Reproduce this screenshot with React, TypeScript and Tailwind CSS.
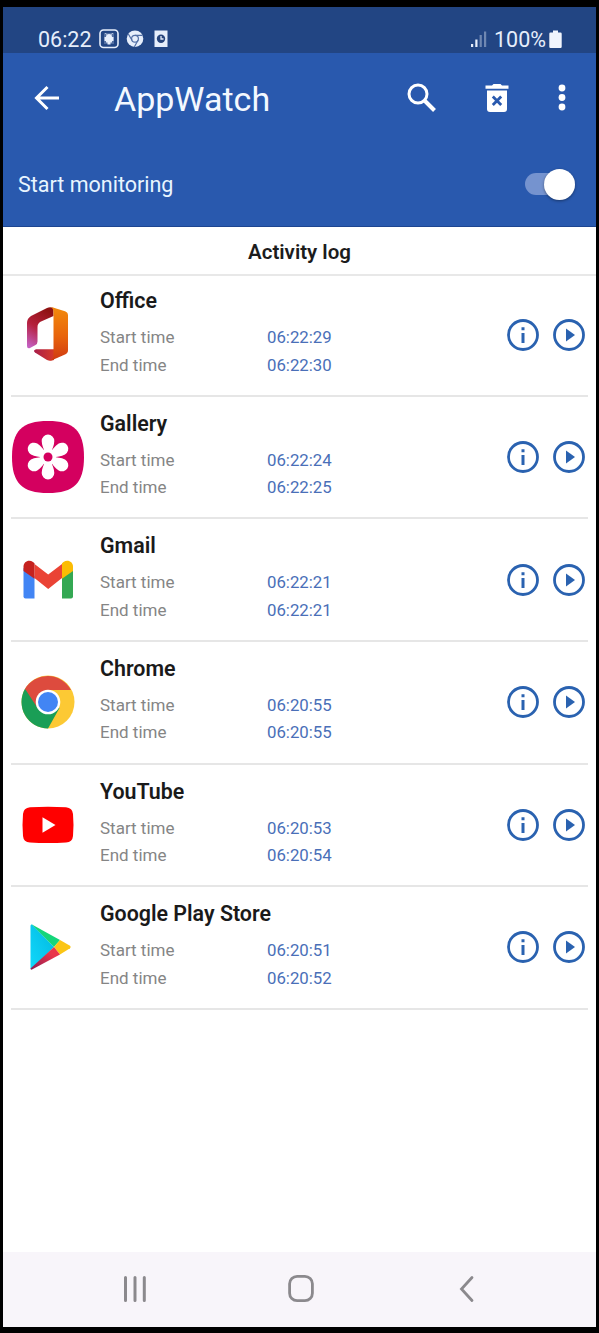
import { useState } from "react"
import type { ReactNode } from "react"

type LogEntry = {
  name: string
  start: string
  end: string
  icon: ReactNode
}

const OfficeIcon = () => (
  <svg width="72" height="72" viewBox="0 0 72 72">
    <defs>
      <linearGradient id="officeLeft" x1="0.6" y1="0" x2="0.2" y2="1">
        <stop offset="0" stopColor="#8f1212" />
        <stop offset="0.5" stopColor="#b5203c" />
        <stop offset="1" stopColor="#c45fc0" />
      </linearGradient>
      <linearGradient id="officeRight" x1="0" y1="0" x2="0" y2="1">
        <stop offset="0" stopColor="#f28a0c" />
        <stop offset="0.55" stopColor="#e8640c" />
        <stop offset="1" stopColor="#cf3a12" />
      </linearGradient>
      <linearGradient id="officeBase" x1="0" y1="0" x2="1" y2="0">
        <stop offset="0" stopColor="#a81d4a" />
        <stop offset="1" stopColor="#d63a2a" />
      </linearGradient>
    </defs>
    <path d="M35 9q3-1.500 6.500 0v8L28.500 22.800Q25.500 24.500 25.500 28v14.500q0 2.500-2 3.500L18 49q-3 1-3-2V24q0-4.500 4-7Z" fill="url(#officeLeft)" />
    <path d="M24 50.200h18V61q-4 1.500-7 0L23 53.500q-2.500-2 1-3.300Z" fill="url(#officeBase)" />
    <path d="M38 8.300l3 .2 12 3.700q3 1 3 4.300v34.800q0 3-3 4.200l-12 5.200q-2 .8-4 .5 4.500-.8 4.500-5V13q0-4-3.500-4.700Z" fill="url(#officeRight)" />
  </svg>
)

const GalleryIcon = () => (
  <svg width="72" height="72" viewBox="0 0 72 72">
    <path d="M36 0C62 0 72 10 72 36S62 72 36 72 0 62 0 36 10 0 36 0Z" fill="#d4005f" />
    <g fill="#fff">
      {[0, 60, 120, 180, 240, 300].map((angle) => (
        <path
          key={angle}
          transform={`rotate(${angle} 36 36)`}
          d="M33 32C32 28 29.700 24.500 29.700 20a6.300 6.500 0 0 1 12.600 0C42.300 24.500 40 28 39 32L36 36Z"
        />
      ))}
      <circle cx="36" cy="36" r="8" />
    </g>
    <circle cx="36" cy="36" r="4.500" fill="#d4005f" />
  </svg>
)

const GmailIcon = () => (
  <svg width="72" height="72" viewBox="0 0 72 72">
    <path d="M11.500 24 22.500 32v22.500h-9q-2 0-2-2Z" fill="#4285f4" />
    <path d="M61 24 50 32v22.500h9q2 0 2-2Z" fill="#34a853" />
    <path d="m22.500 20 13.700 10.500L50 20v14L36.200 45 22.500 34Z" fill="#ea4335" />
    <path d="M11.500 27v-4.500c0-5 5.500-7.500 9.500-4.500l1.500 1.200v15.500l-11-7.700Z" fill="#c5221f" />
    <path d="M61 27v-4.500c0-5-5.500-7.500-9.500-4.500L50 19.200v15.500L61 27Z" fill="#fbbc04" />
  </svg>
)

const ChromeIcon = () => (
  <svg width="72" height="72" viewBox="0 0 72 72">
    <circle cx="36" cy="36" r="26.500" fill="#fcc934" />
    <path d="M36 36 13 22.800A26.500 26.500 0 0 0 36 62.500L47.500 42Z" fill="#1a9e56" />
    <path d="M13 22.800A26.500 26.500 0 0 1 59 24H36L25.500 42Z" fill="#dd4b3e" />
    <circle cx="36" cy="36" r="12.300" fill="#fff" />
    <circle cx="36" cy="36" r="10" fill="#4285f4" />
  </svg>
)

const YouTubeIcon = () => (
  <svg width="72" height="72" viewBox="0 0 72 72">
    <path d="M18 18.300Q36 17.300 54 18.300 60.500 19 61 25 62 36 61 47 60.500 53 54 53.500 36 54.500 18 53.500 11.500 53 11 47 10 36 11 25 11.500 19 18 18.300Z" fill="#f00" />
    <path d="M30.500 28.300v15.400L43.500 36Z" fill="#fff" />
  </svg>
)

const PlayStoreIcon = () => (
  <svg width="72" height="72" viewBox="0 0 72 72">
    <defs>
      <linearGradient id="playBlue" x1="1" y1="0" x2="0" y2="1">
        <stop offset="0" stopColor="#00b8e0" />
        <stop offset="1" stopColor="#12d8fb" />
      </linearGradient>
      <linearGradient id="playRed" x1="1" y1="0" x2="0" y2="1">
        <stop offset="0.3" stopColor="#e9364a" />
        <stop offset="1" stopColor="#8c1a53" />
      </linearGradient>
    </defs>
    <path d="M18.500 15v42q0 1.500 1.500.5L42 36 20 13.500Q18.500 13 18.500 15Z" fill="url(#playBlue)" />
    <path d="M19.500 13.200 48 29 42 36Z" fill="#14d67a" />
    <path d="m48 29 10 5.800q1.500 1.200 0 2.400L48 43.500 42 36Z" fill="#fbc515" />
    <path d="m42 36 6 7.500L20 58.500q-1.500.5-1.500-1Z" fill="url(#playRed)" />
  </svg>
)

const entries: LogEntry[] = [
  { name: "Office", start: "06:22:29", end: "06:22:30", icon: <OfficeIcon /> },
  { name: "Gallery", start: "06:22:24", end: "06:22:25", icon: <GalleryIcon /> },
  { name: "Gmail", start: "06:22:21", end: "06:22:21", icon: <GmailIcon /> },
  { name: "Chrome", start: "06:20:55", end: "06:20:55", icon: <ChromeIcon /> },
  { name: "YouTube", start: "06:20:53", end: "06:20:54", icon: <YouTubeIcon /> },
  { name: "Google Play Store", start: "06:20:51", end: "06:20:52", icon: <PlayStoreIcon /> },
]

export default function App() {
  const [monitoring, setMonitoring] = useState(true)

  return (
    <div className="h-[1333px] w-[599px] bg-black px-[3px] pt-[7px] pb-[6px] font-['Roboto',sans-serif]">
      <div className="flex h-full flex-col bg-white">
        <StatusBar />
        <Toolbar />

        <div className="flex h-[85px] items-center justify-between border-b border-[#1d4590] bg-[#2959ae] pr-[21px] pl-[15px]">
          <span className="pt-[3px] text-[21.5px] text-[#e8f5ff]">Start monitoring</span>
          <button
            role="switch"
            aria-label="Start monitoring"
            aria-checked={monitoring}
            onClick={() => setMonitoring(!monitoring)}
            className={`flex h-[22px] w-[50px] items-center rounded-full bg-[#7593cf] ${monitoring ? "justify-end" : "justify-start"}`}
          >
            <span className="size-[31px] shrink-0 rounded-full bg-white shadow-[0_1px_3px_rgba(0,0,0,0.4)]" />
          </button>
        </div>

        <h2 className="h-[49px] border-b-2 border-[#e8e8e8] text-center text-[20.5px] leading-[51px] font-semibold text-[#1c1c1c]">
          Activity log
        </h2>

        <ul className="-mt-[1.8px] flex-1 px-2">
          {entries.map((entry) => (
            <LogRow key={entry.name} entry={entry} />
          ))}
        </ul>

        <NavBar />
      </div>
    </div>
  )
}

const StatusBar = () => (
  <div className="flex h-[46px] items-center justify-between bg-[#224583] pt-[18px] pr-[34px] pl-[35px] text-[#e6eefb]">
    <div className="flex items-center">
      <span className="w-[61px] pt-px text-[21.5px] leading-7">06:22</span>
      <svg width="72" height="20" viewBox="0 0 72 20" fill="#e6eefb">
        <rect x="1" y="1" width="18" height="17.500" rx="3.500" fill="none" stroke="#e6eefb" strokeWidth="1.600" />
        <path d="M5 4h10v11H5z" opacity="0.25" />
        <path d="M7.500 5.500 6.500 4.200M12.500 5.500l1-1.300" stroke="#e6eefb" />
        <path d="M7 8a3 3 0 0 1 6 0h1.500v4H13v1.500h-1.500v2h-3v-2H7V12H5.500V8Z" />
        <circle cx="36" cy="9.700" r="8.300" />
        <g fill="none" stroke="#526fa5" strokeWidth="1.200">
          <circle cx="36" cy="9.700" r="3.400" />
          <path d="M36 6.300h7.500M33 11.300 29.300 5M39 11.300 35.300 18" />
        </g>
        <path d="M55.500 1.500h13v16.500h-13z" />
        <circle cx="62" cy="9.700" r="4.200" fill="#28457c" />
        <path d="M62 7v3h2.500" fill="none" stroke="#e6eefb" strokeWidth="1.300" />
      </svg>
    </div>
    <div className="flex items-center">
      <svg width="16" height="18" viewBox="0 0 16 18" fill="#e6eefb" className="mr-[7px]">
        <path d="M0 14h2.200v3H0zM4.300 9.500h2.200V17H4.300z" />
        <path d="M8.600 5h2.200v12H8.600zM13 1.500h2.200V17H13z" opacity="0.4" />
      </svg>
      <span className="pt-px text-[21.5px] leading-7">100%</span>
      <svg width="13" height="19" viewBox="0 0 13 19" fill="#f1f5fd" className="ml-[3px]">
        <path d="M4 .5h5v2h2.500q1.200 0 1.200 1.200v13q0 1.300-1.200 1.300h-10Q.3 18 .3 16.700v-13q0-1.200 1.200-1.200H4Z" />
      </svg>
    </div>
  </div>
)

const Toolbar = () => (
  <div className="flex h-[89px] items-center bg-[#2959ae] pr-[30px] pl-[31px] text-white">
    <button aria-label="Back">
      <svg width="26" height="26" viewBox="0 0 26 26" fill="none" stroke="currentColor" strokeWidth="3">
        <path d="M25 13H3M13.500 2 2.500 13l11 11" />
      </svg>
    </button>
    <h1 className="ml-[54px] flex-1 pt-[2px] text-[34px] leading-10 text-[#f3f8ff]">AppWatch</h1>
    <button aria-label="Search">
      <svg width="29" height="29" viewBox="0 0 29 29" fill="none" stroke="currentColor" strokeWidth="3">
        <circle cx="11" cy="11" r="9" />
        <path d="m17 17 10.500 10.500" strokeWidth="4" />
      </svg>
    </button>
    <button aria-label="Clear log" className="ml-[49px]">
      <svg width="24" height="30" viewBox="0 0 24 30" fill="currentColor">
        <path d="M.5 2.500H7L8.500 1h7L17 2.500h6.500v3.300H.5Z" />
        <path d="M2 7.500h20v18.500q0 3-3 3H5q-3 0-3-3Z" />
        <path d="m7.800 13.500 8.400 8.500M16.200 13.500 7.800 22" stroke="#2959ae" strokeWidth="2.800" />
      </svg>
    </button>
    <button aria-label="More options" className="ml-[49px]">
      <svg width="8" height="27" viewBox="0 0 8 27" fill="currentColor">
        <circle cx="4" cy="4" r="3.400" />
        <circle cx="4" cy="13.500" r="3.400" />
        <circle cx="4" cy="23" r="3.400" />
      </svg>
    </button>
  </div>
)

const LogRow = ({ entry }: { entry: LogEntry }) => (
  <li className="flex h-[122.6px] items-center border-b-2 border-[#e6e6e6] pr-[3px]">
    <div className="w-[89px] shrink-0 pl-[0.5px]">{entry.icon}</div>
    <div className="flex-1 self-start pt-[13px]">
      <h3 className="text-[21.4px] leading-7 font-semibold text-[#1a1a1a]">{entry.name}</h3>
      <dl className="mt-[9px] grid grid-cols-[167px_1fr] text-[17px] leading-[27.5px]">
        <dt className="text-[#858585]">Start time</dt>
        <dd className="text-[16.8px] text-[#4a6fb8]">{entry.start}</dd>
        <dt className="text-[#858585]">End time</dt>
        <dd className="text-[16.8px] text-[#4a6fb8]">{entry.end}</dd>
      </dl>
    </div>
    <div className="flex gap-[14px] text-[#2a62b0]">
      <button aria-label="App info">
        <svg width="32" height="32" viewBox="0 0 32 32" fill="currentColor">
          <circle cx="16" cy="16" r="14.500" fill="none" stroke="currentColor" strokeWidth="2.800" />
          <path d="M14.500 8.200h3v3h-3zM14.500 14h3v10h-3z" />
        </svg>
      </button>
      <button aria-label="Launch app">
        <svg width="32" height="32" viewBox="0 0 32 32" fill="currentColor">
          <circle cx="16" cy="16" r="14.500" fill="none" stroke="currentColor" strokeWidth="2.800" />
          <path d="M13 9.500v13l9-6.500Z" />
        </svg>
      </button>
    </div>
  </li>
)

const NavBar = () => (
  <div className="flex h-[75px] items-center bg-[#f8f5fa] pr-[122px] pb-[2px] pl-[120px] text-[#8b898d]">
    <svg width="24" height="28" viewBox="0 0 24 28" fill="none" stroke="currentColor" strokeWidth="3" strokeLinecap="round">
      <path d="M2.500 2.500v23M12 2.500v23M21.300 2.500v23" />
    </svg>
    <svg width="26" height="29" viewBox="0 0 26 29" fill="none" stroke="currentColor" strokeWidth="2.800" className="ml-[141px]">
      <rect x="1.600" y="2.300" width="22.800" height="24.400" rx="7.500" />
    </svg>
    <svg width="15" height="28" viewBox="0 0 15 28" fill="none" stroke="currentColor" strokeWidth="2.800" strokeLinecap="round" className="ml-auto">
      <path d="M13 2.500 2.500 14 13 25.500" />
    </svg>
  </div>
)
